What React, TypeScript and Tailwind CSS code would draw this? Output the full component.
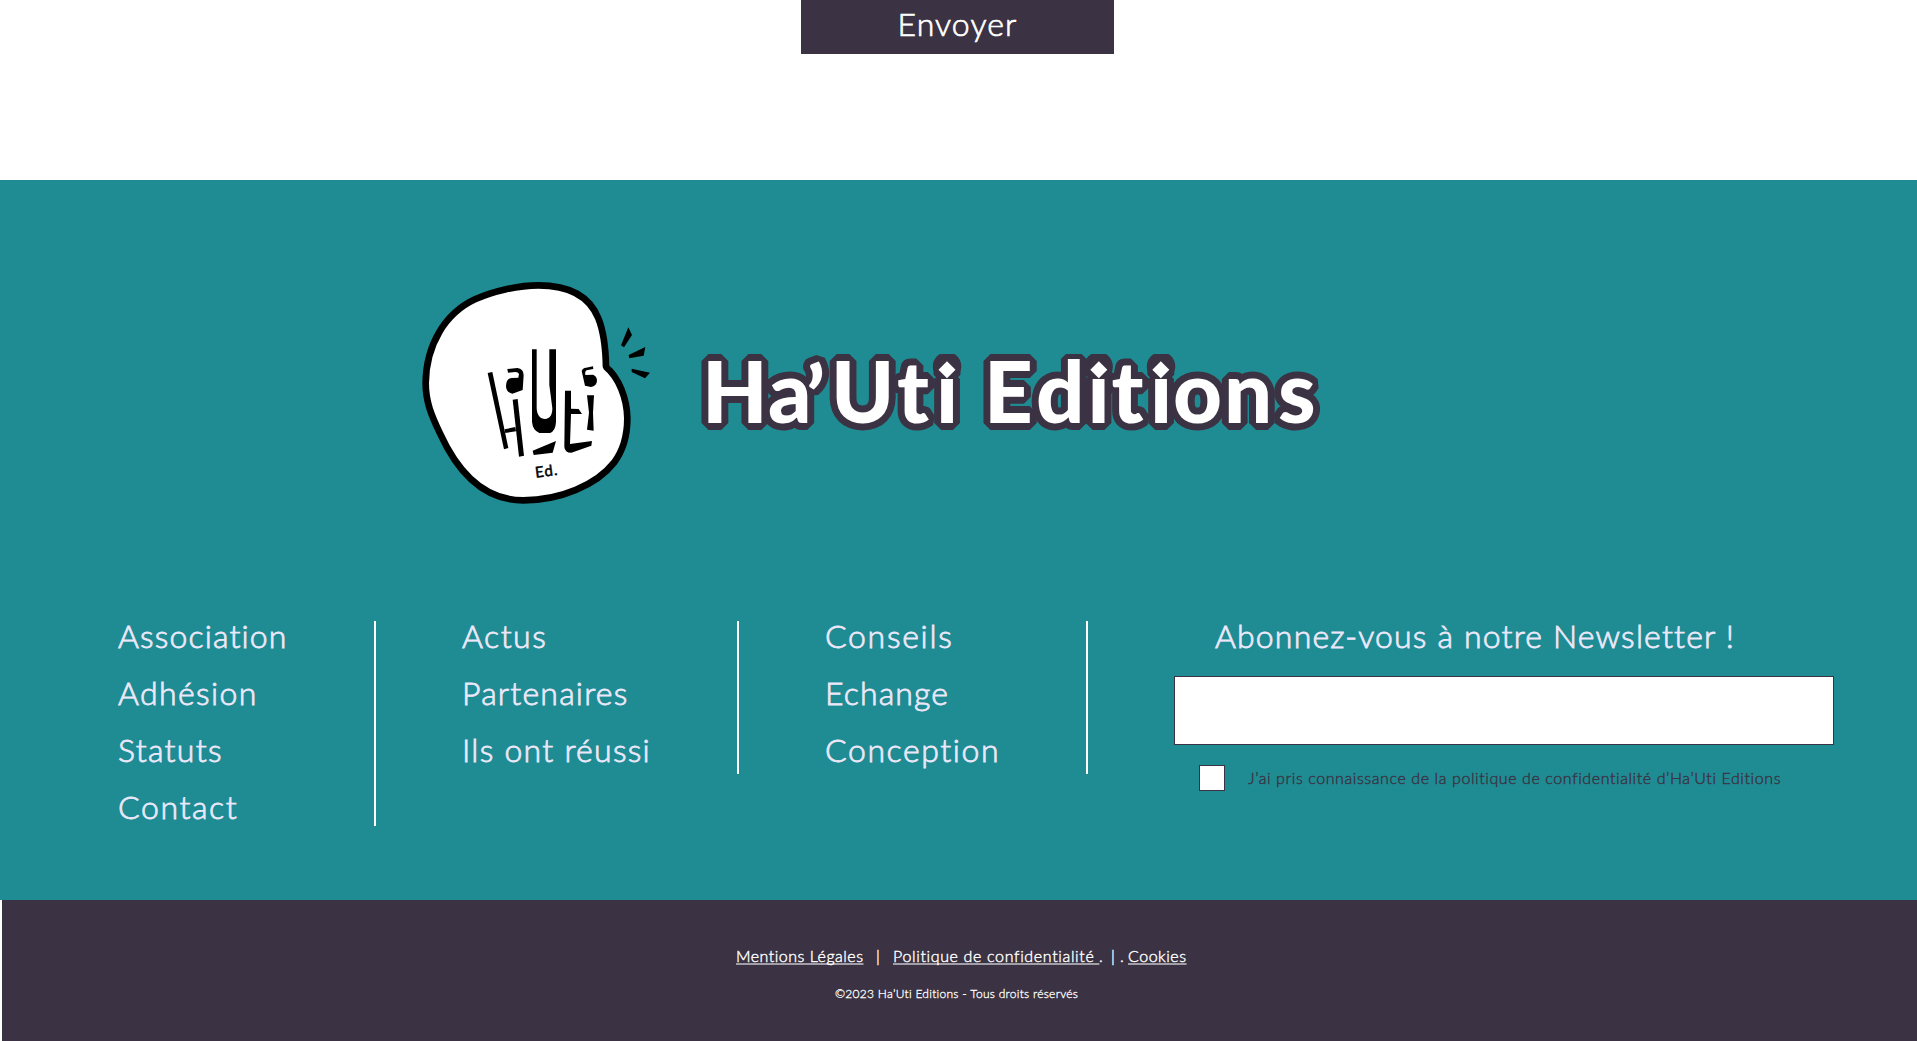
type Item = { label: string; tracking: string };

const columns: { items: Item[]; box: string; divider: string }[] = [
  {
    box: "w-[258px] ml-[118px]",
    divider: "h-[205px]",
    items: [
      { label: "Association", tracking: "tracking-[1.12px]" },
      { label: "Adhésion", tracking: "tracking-[1.38px]" },
      { label: "Statuts", tracking: "tracking-[1.3px]" },
      { label: "Contact", tracking: "tracking-[1.6px]" },
    ],
  },
  {
    box: "w-[277px] ml-[86px]",
    divider: "h-[153px]",
    items: [
      { label: "Actus", tracking: "tracking-[1.5px]" },
      { label: "Partenaires", tracking: "tracking-[1.2px]" },
      { label: "Ils ont réussi", tracking: "tracking-[1.26px]" },
    ],
  },
  {
    box: "w-[263px] ml-[86px]",
    divider: "h-[153px]",
    items: [
      { label: "Conseils", tracking: "tracking-[1.7px]" },
      { label: "Echange", tracking: "tracking-[1.1px]" },
      { label: "Conception", tracking: "tracking-[1.6px]" },
    ],
  },
];

function Logo() {
  return (
    <svg className="h-[245px] w-[250px] shrink-0" viewBox="0 0 750 735" aria-label="Ha'Uti Ed.">
      <path
        d="M588 291 C587 235 583 190 565 145 C540 82 480 46 385 46 C325 46 250 63 195 88 C105 130 48 225 47 340 C47 395 64 436 90 490 C140 600 215 691 340 691 C450 691 560 645 612 578 C640 541 652 500 652 445 C651 385 626 322 588 291 Z"
        fill="#fff"
        stroke="#000"
        strokeWidth="20"
        strokeLinejoin="bevel"
      />
      <g fill="#000">
        <path d="M655 172 L666 195 L642 232 L633 226 Z" />
        <path d="M656 255 L706 231 L701 257 L658 265 Z" />
        <path d="M665 296 L720 308 L705 325 L665 306 Z" />
        <path d="M233 309 L247 306 L295 534 L282 538 Z" />
        <path d="M308 389 L323 387 L342 557 L327 560 Z" />
        <path d="M284 478 L316 471 L318 484 L286 489 Z" />
        <path d="M292 297 L322 294 Q341 296 341 316 L338 360 L307 371 Q288 367 288 348 Q289 325 305 324 L325 323 L327 312 Q325 306 316 306 L294 308 Z" />
        <path d="M366 238 H380 V415 C381 437 391 447 405 447 C420 446 427 436 427 415 L418 345 V238 H438 V455 Q437 482 420 489 H388 Q368 480 366 455 Z" />
        <path d="M368 542 L438 513 L428 548 L371 555 Z" />
        <path d="M465 362 H483 V416 L506 417 L516 432 H483 L480 522 L546 513 L544 527 L484 548 Q464 548 463 530 Z" />
        <path d="M531 376 H552 L549 428 L551 482 L531 479 L537 428 Z" />
        <path d="M515 303 Q518 294 528 293 L549 289 L550 297 L530 301 Q524 304 526 315 L549 314 Q561 319 561 332 Q560 348 543 351 L525 347 Z" />
      </g>
      <text
        x="377"
        y="623"
        fontFamily="Lato, sans-serif"
        fontSize="45"
        fontWeight="400"
        stroke="#000"
        strokeWidth="1.5"
        letterSpacing="3"
        transform="rotate(-7 377 623)"
      >
        Ed.
      </text>
    </svg>
  );
}

const dots = [947, 1098.8, 1160.8];

function Title() {
  const text = {
    x: "702 768 806 831 897 936 960 984 1036 1087.5 1111.5 1150 1173 1224 1278",
    y: "423 423 428 423 423 423 423 423 423 423 423 423 423 423 423",
    fontFamily: "Lato, sans-serif",
    fontSize: 85,
    fontWeight: 900,
  };
  return (
    <svg className="mt-[50px] ml-[30px] h-[145px] w-[640px] shrink-0" viewBox="690 320 640 145">
      <clipPath id="outline-band">
        <rect x="690" y="354" width="640" height="100" />
      </clipPath>
      <g clipPath="url(#outline-band)" stroke="#3b3343" fill="#3b3343" strokeWidth="14" strokeLinejoin="bevel">
        <text {...text} aria-hidden="true">Ha’Uti Editions</text>
        {dots.map((x) => (
          <path key={x} d={`M${x} 361.2 l8.5 8.5 l-8.5 8.5 l-8.5 -8.5 Z`} />
        ))}
      </g>
      <text {...text} fill="#fff">Ha’Uti Editions</text>
      {dots.map((x) => (
        <g key={x}>
          <circle cx={x} cy="367" r="10.5" fill="#3b3343" />
          <path d={`M${x} 361.2 l8.5 8.5 l-8.5 8.5 l-8.5 -8.5 Z`} fill="#fff" />
        </g>
      ))}
    </svg>
  );
}

export default function App() {
  return (
    <div className="h-[1041px] w-full overflow-hidden bg-white font-['Lato',sans-serif]">
      <div className="flex h-[180px] items-start pl-[801px]">
        <button className="h-[54px] w-[313px] bg-[#3b3343] pb-[7px] text-center text-[32px] leading-[47px] font-light tracking-[1.1px] text-white [-webkit-text-stroke:0.7px]">
          Envoyer
        </button>
      </div>

      <footer>
        <div className="h-[720px] bg-[#1f8c93] pt-[90px]">
          <div className="flex items-start pl-[410px]">
            <Logo />
            <Title />
          </div>

          <div className="mt-[92px] flex items-start text-[32px] leading-[57px] font-light text-[#ece8fa] [-webkit-text-stroke:0.8px]">
            {columns.map((c) => (
              <div key={c.items[0].label} className={`flex shrink-0 items-start justify-between ${c.box}`}>
                <ul>
                  {c.items.map((i) => (
                    <li key={i.label} className={`whitespace-nowrap ${i.tracking}`}>
                      {i.label}
                    </li>
                  ))}
                </ul>
                <div className={`mt-[14px] w-[2px] bg-white ${c.divider}`} />
              </div>
            ))}

            <form className="ml-[86px] w-[660px] shrink-0">
              <h2 className="pl-[41px] tracking-[1.17px] whitespace-nowrap">Abonnez-vous à notre Newsletter !</h2>
              <input className="mt-[12px] block h-[69px] w-full border border-[#3b3343] bg-white" />
              <label className="mt-[20px] flex h-[26px] items-center pl-[25px] text-base leading-[26px] text-[#3b3343] [-webkit-text-stroke:0.4px]">
                <span className="size-[26px] border border-[#3b3343] bg-white" />
                <span className="ml-[23px] tracking-[0.59px] whitespace-nowrap">
                  J’ai pris connaissance de la politique de confidentialité d’Ha’Uti Editions
                </span>
              </label>
            </form>
          </div>
        </div>

        <div className="ml-[2px] h-[141px] bg-[#3b3343] pt-[44px] text-white">
          <div className="flex pl-[734px] text-base leading-6 font-light whitespace-pre decoration-[#a29ea8] decoration-[1.5px] underline-offset-1 [-webkit-text-stroke:0.4px] [text-decoration-skip-ink:none]">
            <a className="w-[127px] tracking-[0.5px] underline">Mentions Légales</a>
            <span className="w-[30px] text-center">|</span>
            <a className="w-[206px] tracking-[0.65px] underline">Politique de confidentialité </a>
            <span className="w-[8px]">.</span>
            <span className="w-[12px] text-center">|</span>
            <span className="ml-[1px] w-[8px]">.</span>
            <a className="tracking-[0.53px] underline">Cookies</a>
          </div>
          <p className="mt-[17px] pl-[833px] text-xs leading-[18px] font-light tracking-[0.28px] whitespace-nowrap [-webkit-text-stroke:0.3px]">
            ©2023 Ha’Uti Editions - Tous droits réservés
          </p>
        </div>
      </footer>
    </div>
  );
}
